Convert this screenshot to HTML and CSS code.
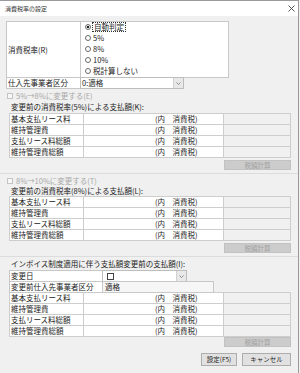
FILE: index.html
```html
<!DOCTYPE html>
<html lang="ja">
<head>
    <meta charset="UTF-8">
    <title>消費税率の設定</title>
    <link rel="stylesheet" href="styles.css">
</head>
<body>
    <div class="window">
        <!-- Title bar -->
        <header class="titlebar">
            <span class="title">消費税率の設定</span>
            <svg class="close" width="7" height="7" viewBox="0 0 7 7"><path d="M0.5 0.5L6.5 6.5M6.5 0.5L0.5 6.5"/></svg>
        </header>

        <main class="content">
            <!-- Rate selection -->
            <div class="rate-box">
                <div class="rate-label">消費税率(R)</div>
                <div class="rate-options">
                    <div class="radio checked"><span class="dot"></span><span class="focus">自動判定</span></div>
                    <div class="radio"><span class="dot"></span>5%</div>
                    <div class="radio"><span class="dot"></span>8%</div>
                    <div class="radio"><span class="dot"></span>10%</div>
                    <div class="radio"><span class="dot"></span>税計算しない</div>
                </div>
            </div>
            <div class="field-row">
                <div class="field-label">仕入先事業者区分</div>
                <div class="select supplier">
                    <span class="select-text">0:適格</span>
                    <span class="select-arrow"><svg width="5" height="3" viewBox="0 0 5 3"><path d="M0.5 0.5L2.5 2.5L4.5 0.5"/></svg></span>
                </div>
            </div>

            <!-- 5% -> 8% -->
            <section class="period first">
                <div class="check disabled"><span class="box"></span>5%→8%に変更する(E)</div>
                <div class="subtitle">変更前の消費税率(5%)による支払額(K):</div>
                <div class="pay-grid">
                    <div class="cell label">基本支払リース料</div><div class="cell value"><span class="tax">(内　消費税)</span></div><div class="cell side"></div>
                    <div class="cell label">維持管理費</div><div class="cell value"><span class="tax">(内　消費税)</span></div><div class="cell side"></div>
                    <div class="cell label">支払リース料総額</div><div class="cell value"><span class="tax">(内　消費税)</span></div><div class="cell side"></div>
                    <div class="cell label">維持管理費総額</div><div class="cell value"><span class="tax">(内　消費税)</span></div><div class="cell side"></div>
                </div>
                <div class="calc-row"><button class="btn-calc" disabled>税額計算</button></div>
            </section>

            <!-- 8% -> 10% -->
            <section class="period second">
                <div class="check disabled"><span class="box"></span>8%→10%に変更する(T)</div>
                <div class="subtitle">変更前の消費税率(8%)による支払額(L):</div>
                <div class="pay-grid">
                    <div class="cell label">基本支払リース料</div><div class="cell value"><span class="tax">(内　消費税)</span></div><div class="cell side"></div>
                    <div class="cell label">維持管理費</div><div class="cell value"><span class="tax">(内　消費税)</span></div><div class="cell side"></div>
                    <div class="cell label">支払リース料総額</div><div class="cell value"><span class="tax">(内　消費税)</span></div><div class="cell side"></div>
                    <div class="cell label">維持管理費総額</div><div class="cell value"><span class="tax">(内　消費税)</span></div><div class="cell side"></div>
                </div>
                <div class="calc-row"><button class="btn-calc" disabled>税額計算</button></div>
            </section>

            <!-- Invoice system -->
            <section class="period invoice">
                <div class="subtitle">インボイス制度適用に伴う支払額変更前の支払額(I):</div>
                <div class="invoice-rows">
                    <div class="inv-row">
                        <div class="inv-label">変更日</div>
                        <div class="select date">
                            <span class="select-text"><span class="date-box"></span></span>
                            <span class="select-arrow"><svg width="5" height="3" viewBox="0 0 5 3"><path d="M0.5 0.5L2.5 2.5L4.5 0.5"/></svg></span>
                        </div>
                    </div>
                    <div class="inv-row">
                        <div class="inv-label">変更前仕入先事業者区分</div>
                        <div class="readonly">適格</div>
                    </div>
                </div>
                <div class="pay-grid joined">
                    <div class="cell label">基本支払リース料</div><div class="cell value"><span class="tax">(内　消費税)</span></div><div class="cell side"></div>
                    <div class="cell label">維持管理費</div><div class="cell value"><span class="tax">(内　消費税)</span></div><div class="cell side"></div>
                    <div class="cell label">支払リース料総額</div><div class="cell value"><span class="tax">(内　消費税)</span></div><div class="cell side"></div>
                    <div class="cell label">維持管理費総額</div><div class="cell value"><span class="tax">(内　消費税)</span></div><div class="cell side"></div>
                </div>
                <div class="calc-row tight"><button class="btn-calc" disabled>税額計算</button></div>
            </section>
        </main>

        <!-- Dialog buttons -->
        <footer class="footer">
            <button class="btn ok">設定(F5)</button>
            <button class="btn cancel">キャンセル</button>
        </footer>
    </div>
</body>
</html>
```

FILE: styles.css
```css
/* Reset and base styles */
* {
    margin: 0;
    padding: 0;
    box-sizing: border-box;
}

body {
    width: 300px;
    height: 373px;
    overflow: hidden;
    background-color: #f0f0f0;
    font-family: "Noto Sans CJK JP", "Noto Sans", sans-serif;
    font-size: 7.5px;
    line-height: 10px;
    color: #222;
}

/* Window frame */
.window {
    width: 299px;
    height: 373px;
    border-top: 1px solid #9a9a9a;
    border-right: 1px solid #9a9a9a;
    background: #f0f0f0;
    display: flex;
    flex-direction: column;
}

.titlebar {
    height: 15px;
    background: #fff;
    display: flex;
    align-items: center;
    justify-content: space-between;
    padding: 0 3px 0 5px;
}

.title {
    font-size: 6px;
    color: #333;
}

.close path {
    stroke: #555;
    stroke-width: 1;
    fill: none;
}

.content {
    padding-top: 5px;
}

/* Rate selection box */
.rate-box {
    margin-left: 6px;
    width: 223px;
    height: 57px;
    display: grid;
    grid-template-columns: 73px 147px;
    gap: 1px;
    padding: 1px;
    background: #c8c8c8;
}

.rate-label {
    background: #fff;
    display: flex;
    align-items: center;
    padding-left: 1px;
}

.rate-options {
    background: #fff;
    padding-left: 4px;
    display: flex;
    flex-direction: column;
}

.radio {
    height: 10.8px;
    display: flex;
    align-items: center;
    gap: 2px;
}

.dot {
    width: 6px;
    height: 6px;
    border: 1px solid #6a6a6a;
    border-radius: 50%;
    background: #fff;
}

.radio.checked .dot {
    background: radial-gradient(circle, #222 0 1.3px, #fff 1.6px);
}

.focus {
    outline: 1px dotted #333;
    padding: 0 1px;
    line-height: 8px;
}

/* Select boxes */
.field-row {
    margin-left: 6px;
    margin-top: -1px;
    height: 12px;
    display: flex;
}

.field-label {
    width: 75px;
    border: 1px solid #c8c8c8;
    background: #fff;
    padding-left: 1px;
    display: flex;
    align-items: center;
}

.select {
    margin-left: -1px;
    border: 1px solid #bdbdbd;
    background: #fff;
    display: flex;
    justify-content: space-between;
}

.select.supplier {
    width: 104px;
}

.select-text {
    padding-left: 1px;
    display: flex;
    align-items: center;
}

.select-arrow {
    width: 10px;
    border-left: 1px solid #d0d0d0;
    background: #e8e8e8;
    display: flex;
    align-items: center;
    justify-content: center;
}

.select-arrow path {
    stroke: #777;
    stroke-width: 0.8;
    fill: none;
}

/* Period sections */
.period {
    border-top: 1px solid #dcdcdc;
    padding-top: 1px;
}

.period.first {
    border-top-color: transparent;
}

.period.second {
    margin-top: 3px;
    padding-top: 2px;
}

.check {
    margin-left: 7px;
    height: 10px;
    display: flex;
    align-items: center;
    gap: 3px;
}

.check.disabled {
    color: #a8a8a8;
}

.check .box {
    width: 6px;
    height: 6px;
    border: 1px solid #c4c4c4;
    background: #f7f7f7;
}

.subtitle {
    margin-left: 11px;
    margin-top: 1px;
    height: 10px;
}

.pay-grid {
    margin: 1px 0 0 9px;
    width: 282px;
    display: grid;
    grid-template-columns: 73px 139px 66px;
    grid-auto-rows: 10px;
    gap: 1px;
    padding: 1px;
    background: #cdcdcd;
}

.second .subtitle,
.second .pay-grid {
    margin-top: 0;
}

.cell {
    background: #fff;
    display: flex;
    align-items: center;
}

.cell.label {
    padding-left: 1px;
}

.cell.value {
    padding-left: 71px;
}

.cell.side {
    background: #f0f0f0;
}

.calc-row {
    margin: 2px 0 0 9px;
    width: 282px;
    display: flex;
    justify-content: flex-end;
}

.calc-row.tight {
    margin-top: 0;
}

.btn-calc {
    width: 67px;
    height: 10px;
    border: 1px solid #c2c2c2;
    background: #cccccc;
    color: #a0a0a0;
    font-family: inherit;
    font-size: 6.5px;
    line-height: 8px;
}

/* Invoice section */
.period.invoice {
    margin-top: 3px;
    padding-top: 2px;
}

.invoice .subtitle {
    margin-top: 0;
}

.invoice-rows {
    margin: 1px 0 0 9px;
}

.inv-row {
    height: 12px;
    display: flex;
}

.inv-row + .inv-row {
    margin-top: -1px;
}

.inv-label {
    width: 94px;
    border: 1px solid #c8c8c8;
    background: #fff;
    padding-left: 1px;
    display: flex;
    align-items: center;
}

.select.date {
    width: 85px;
}

.date-box {
    width: 7px;
    height: 7px;
    margin-left: 3px;
    border: 1px solid #444;
    background: #fff;
}

.readonly {
    width: 112px;
    margin-left: -1px;
    border: 1px solid #c8c8c8;
    background: #f6f6f6;
    padding-left: 2px;
    display: flex;
    align-items: center;
}

.pay-grid.joined {
    margin-top: -1px;
}

/* Dialog buttons */
.footer {
    margin-top: 6px;
    padding-right: 7px;
    display: flex;
    justify-content: flex-end;
    gap: 5px;
}

.btn {
    height: 13px;
    border: 1px solid #adadad;
    background: #e1e1e1;
    color: #222;
    font-family: inherit;
    font-size: 6.5px;
    line-height: 11px;
}

.btn.ok {
    width: 36px;
}

.btn.cancel {
    width: 49px;
}
```
